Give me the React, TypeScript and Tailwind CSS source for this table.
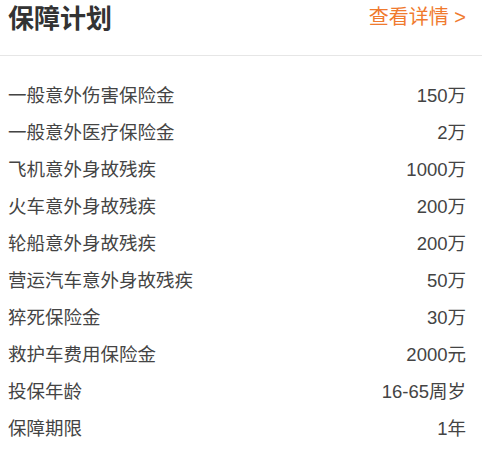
const rows: [string, string][] = [
  ["一般意外伤害保险金", "150万"],
  ["一般意外医疗保险金", "2万"],
  ["飞机意外身故残疾", "1000万"],
  ["火车意外身故残疾", "200万"],
  ["轮船意外身故残疾", "200万"],
  ["营运汽车意外身故残疾", "50万"],
  ["猝死保险金", "30万"],
  ["救护车费用保险金", "2000元"],
  ["投保年龄", "16-65周岁"],
  ["保障期限", "1年"],
]

export default function App() {
  return (
    <div
      className="w-[482px] h-[456px] bg-white"
      style={{ fontFamily: '"Liberation Sans", "Noto Sans CJK SC", sans-serif' }}
    >
      <div className="flex h-[56px] items-start justify-between border-b border-[#e6e6e6] pl-[8px] pr-[16px]">
        <h2 className="mt-[2px] text-[26px] font-bold leading-[34px] text-[#333]">保障计划</h2>
        <a className="mt-[3px] text-[20px] leading-[28px] text-[#f07a2e]">查看详情 &gt;</a>
      </div>
      <div className="pt-[21px] pl-[8px] pr-[16px]">
        {rows.map(([label, value]) => (
          <div key={label} className="flex h-[37px] items-center justify-between text-[18.5px] text-[#444]">
            <span>{label}</span>
            <span>{value}</span>
          </div>
        ))}
      </div>
    </div>
  )
}
